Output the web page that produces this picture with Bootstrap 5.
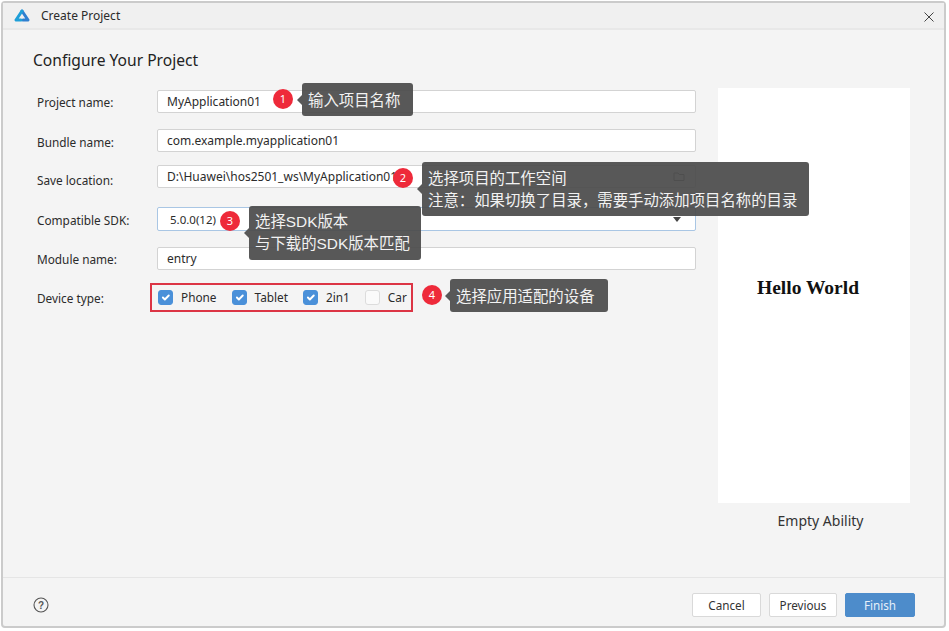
<!DOCTYPE html>
<html lang="en">
<head>
<meta charset="utf-8">
<title>Create Project</title>
<link href="https://cdn.jsdelivr.net/npm/bootstrap@5.3.0/dist/css/bootstrap.min.css" rel="stylesheet">
<style>
html,body{height:100%;}
body{background:#fff;font-family:"Noto Sans","Noto Sans CJK SC",sans-serif;font-size:11.8px;color:#2b2b2b;padding:1px 3px 3px 1px;overflow:hidden;}
.dlg{height:627px;background:#f4f4f4;border:2px solid #cbcbcb;border-radius:4px;position:relative;display:flex;flex-direction:column;}
.dlg-title{height:27px;background:#f0f0f0;border-bottom:2px solid #e8e8e8;padding:0 10px 0 11px;flex:none;}
.dlg-title span{font-size:12px;margin-left:11px;}
.dlg-x{width:12px;height:12px;}
.dlg-body{flex:1;padding:0 33px 0 29px;min-height:0;}
.dlg-h{font-size:15.6px;line-height:22px;margin:19px 0 0 1px;color:#222;font-weight:400;}
.form-area{width:664px;margin-top:19px;}
.lbl{width:125px;padding-left:5px;flex:none;font-size:11.8px;line-height:16px;}
.lbl-a{padding-top:2px;}
.lbl-b{padding-top:7px;}
.fld{height:23px;width:539px;border:1px solid #d3d3d3;border-radius:2px;background:#fff;padding:0 9px;font-size:12px;color:#2b2b2b;box-shadow:none;line-height:21px;}
.fld-sel{border-color:#a9c6e4;padding-left:12px;padding-right:14px;background:#fff;height:24px;font-size:11.5px;}
.r1{margin-bottom:16px;}
.r2{margin-bottom:13px;}
.r3{margin-bottom:19px;}
.r4{margin-bottom:16px;}
.r5{margin-bottom:14px;}
.devs{margin-left:-7px;width:263px;height:29px;border:2px solid #dc3545;padding:0 5px 0 6px;margin-top:-1px;}
.chk{width:15px;height:15px;margin:0 8px 0 0;border-radius:2px;border:1px solid #dcdcdc;background-color:#fafafa;float:none;flex:none;}
.chk:checked{background-color:#4a90d9;border-color:#4a90d9;}
.dev-lbl{margin-right:15px;font-size:11.8px;}
.pv{width:192px;margin-left:22px;flex:none;}
.pv-top{height:58px;}
.pv-screen{height:415px;background:#fff;font-family:"Liberation Serif",serif;font-weight:700;font-size:19.5px;color:#111;padding:0 12px 16px 0;}
.pv-cap{font-size:14px;line-height:18px;margin-top:9px;padding-left:13px;color:#333;}
.dlg-foot{height:49px;border-top:1px solid #e5e5e5;flex:none;padding:6px 29px 0 30px;}
.q{width:16px;height:16px;}
.bt{width:69px;height:24px;padding:0;font-size:11.7px;line-height:22px;border-radius:2px;border:1px solid #d9d9d9;background:#fff;color:#333;}
.bt-prev{width:68px;}
.bt-main{width:70px;background:#4d8ccb;border-color:#4d8ccb;color:#e6f0fa;}
.note{position:absolute;background:rgba(75,75,75,.93);color:#f2f2f2;border-radius:3px;font-size:15.4px;line-height:22px;padding:6px 6px 5px;white-space:nowrap;z-index:3;font-family:"Liberation Sans","Noto Sans CJK SC",sans-serif;}
.note::before{content:"";position:absolute;left:-5px;top:50%;margin-top:-5px;border:5px solid transparent;border-left:0;border-right-color:#585858;}
.pin{position:absolute;width:20px;height:20px;border-radius:50%;background:#ee2a3a;color:#fff;font-size:11px;line-height:20px;text-align:center;z-index:4;}
.n1{left:299px;top:80px;height:33px;width:111px;padding-top:7px;}
.p1{left:270px;top:86px;}
.n2{left:419px;top:159px;height:54px;width:387px;}
.p2{left:390px;top:165px;}
.n3{left:246px;top:203px;height:54px;width:172px;padding-top:5px;}
.p3{left:217px;top:208px;}
.n4{left:447px;top:276px;height:33px;width:158px;padding-top:7px;}
.p4{left:419px;top:282px;}
</style>
</head>
<body>
<div class="dlg">
  <div class="dlg-title d-flex align-items-center">
    <svg width="16" height="13" viewBox="0 0 16 13"><path d="M8 2 L14 11 H9" fill="none" stroke="#2f7fd0" stroke-width="3" stroke-linejoin="round" stroke-linecap="round"/><path d="M8 2 L2 11 H7" fill="none" stroke="#1f9fd8" stroke-width="3" stroke-linejoin="round" stroke-linecap="round"/></svg>
    <span>Create Project</span>
    <svg class="dlg-x ms-auto" viewBox="0 0 12 12"><path d="M2.500 2.500 L11.500 11.500 M11.500 2.500 L2.500 11.500" stroke="#444" stroke-width="1" fill="none"/></svg>
  </div>
  <div class="dlg-body d-flex">
    <div class="flex-grow-0">
      <h1 class="dlg-h">Configure Your Project</h1>
      <div class="form-area">
        <div class="d-flex align-items-center r1"><label class="lbl">Project name:</label><input class="form-control fld" value="MyApplication01"></div>
        <div class="d-flex align-items-center r2"><label class="lbl lbl-a">Bundle name:</label><input class="form-control fld" value="com.example.myapplication01"></div>
        <div class="d-flex align-items-center r3"><label class="lbl lbl-b">Save location:</label>
          <div class="form-control fld d-flex align-items-center justify-content-between"><span>D:\Huawei\hos2501_ws\MyApplication01</span>
          <svg width="13" height="11" viewBox="0 0 13 11"><path d="M1 9.500V2h4l1.200 1.500H11V9.500Z" fill="none" stroke="#777"/></svg></div></div>
        <div class="d-flex align-items-center r4"><label class="lbl lbl-a">Compatible SDK:</label>
          <div class="form-control fld fld-sel d-flex align-items-center justify-content-between"><span>5.0.0(12)</span>
          <svg width="8" height="5" viewBox="0 0 8 5"><path d="M0 0H8L4 5Z" fill="#444"/></svg></div></div>
        <div class="d-flex align-items-center r5"><label class="lbl">Module name:</label><input class="form-control fld" value="entry"></div>
        <div class="d-flex align-items-center"><label class="lbl">Device type:</label>
          <div class="devs d-flex align-items-center">
            <input class="form-check-input chk" type="checkbox" checked><span class="dev-lbl">Phone</span>
            <input class="form-check-input chk" type="checkbox" checked><span class="dev-lbl">Tablet</span>
            <input class="form-check-input chk" type="checkbox" checked><span class="dev-lbl">2in1</span>
            <input class="form-check-input chk" type="checkbox"><span>Car</span>
          </div>
        </div>
      </div>
    </div>
    <div class="pv">
      <div class="pv-top"></div>
      <div class="pv-screen d-flex align-items-center justify-content-center">Hello World</div>
      <div class="pv-cap text-center">Empty Ability</div>
    </div>
  </div>
  <div class="dlg-foot d-flex align-items-center">
    <svg class="q" viewBox="0 0 16 16"><circle cx="8" cy="8" r="7" fill="none" stroke="#555" stroke-width="1.100"/><text x="8" y="11.500" font-size="10" font-family="Liberation Sans" font-weight="700" text-anchor="middle" fill="#555">?</text></svg>
    <div class="ms-auto d-flex gap-2">
      <button class="btn bt">Cancel</button>
      <button class="btn bt bt-prev">Previous</button>
      <button class="btn bt bt-main">Finish</button>
    </div>
  </div>

  <div class="pin p1">1</div><div class="note n1">输入项目名称</div>
  <div class="pin p2">2</div><div class="note n2">选择项目的工作空间<br>注意：如果切换了目录，需要手动添加项目名称的目录</div>
  <div class="pin p3">3</div><div class="note n3">选择SDK版本<br>与下载的SDK版本匹配</div>
  <div class="pin p4">4</div><div class="note n4">选择应用适配的设备</div>
</div>
<script src="https://cdn.jsdelivr.net/npm/bootstrap@5.3.0/dist/js/bootstrap.bundle.min.js"></script>
</body>
</html>
